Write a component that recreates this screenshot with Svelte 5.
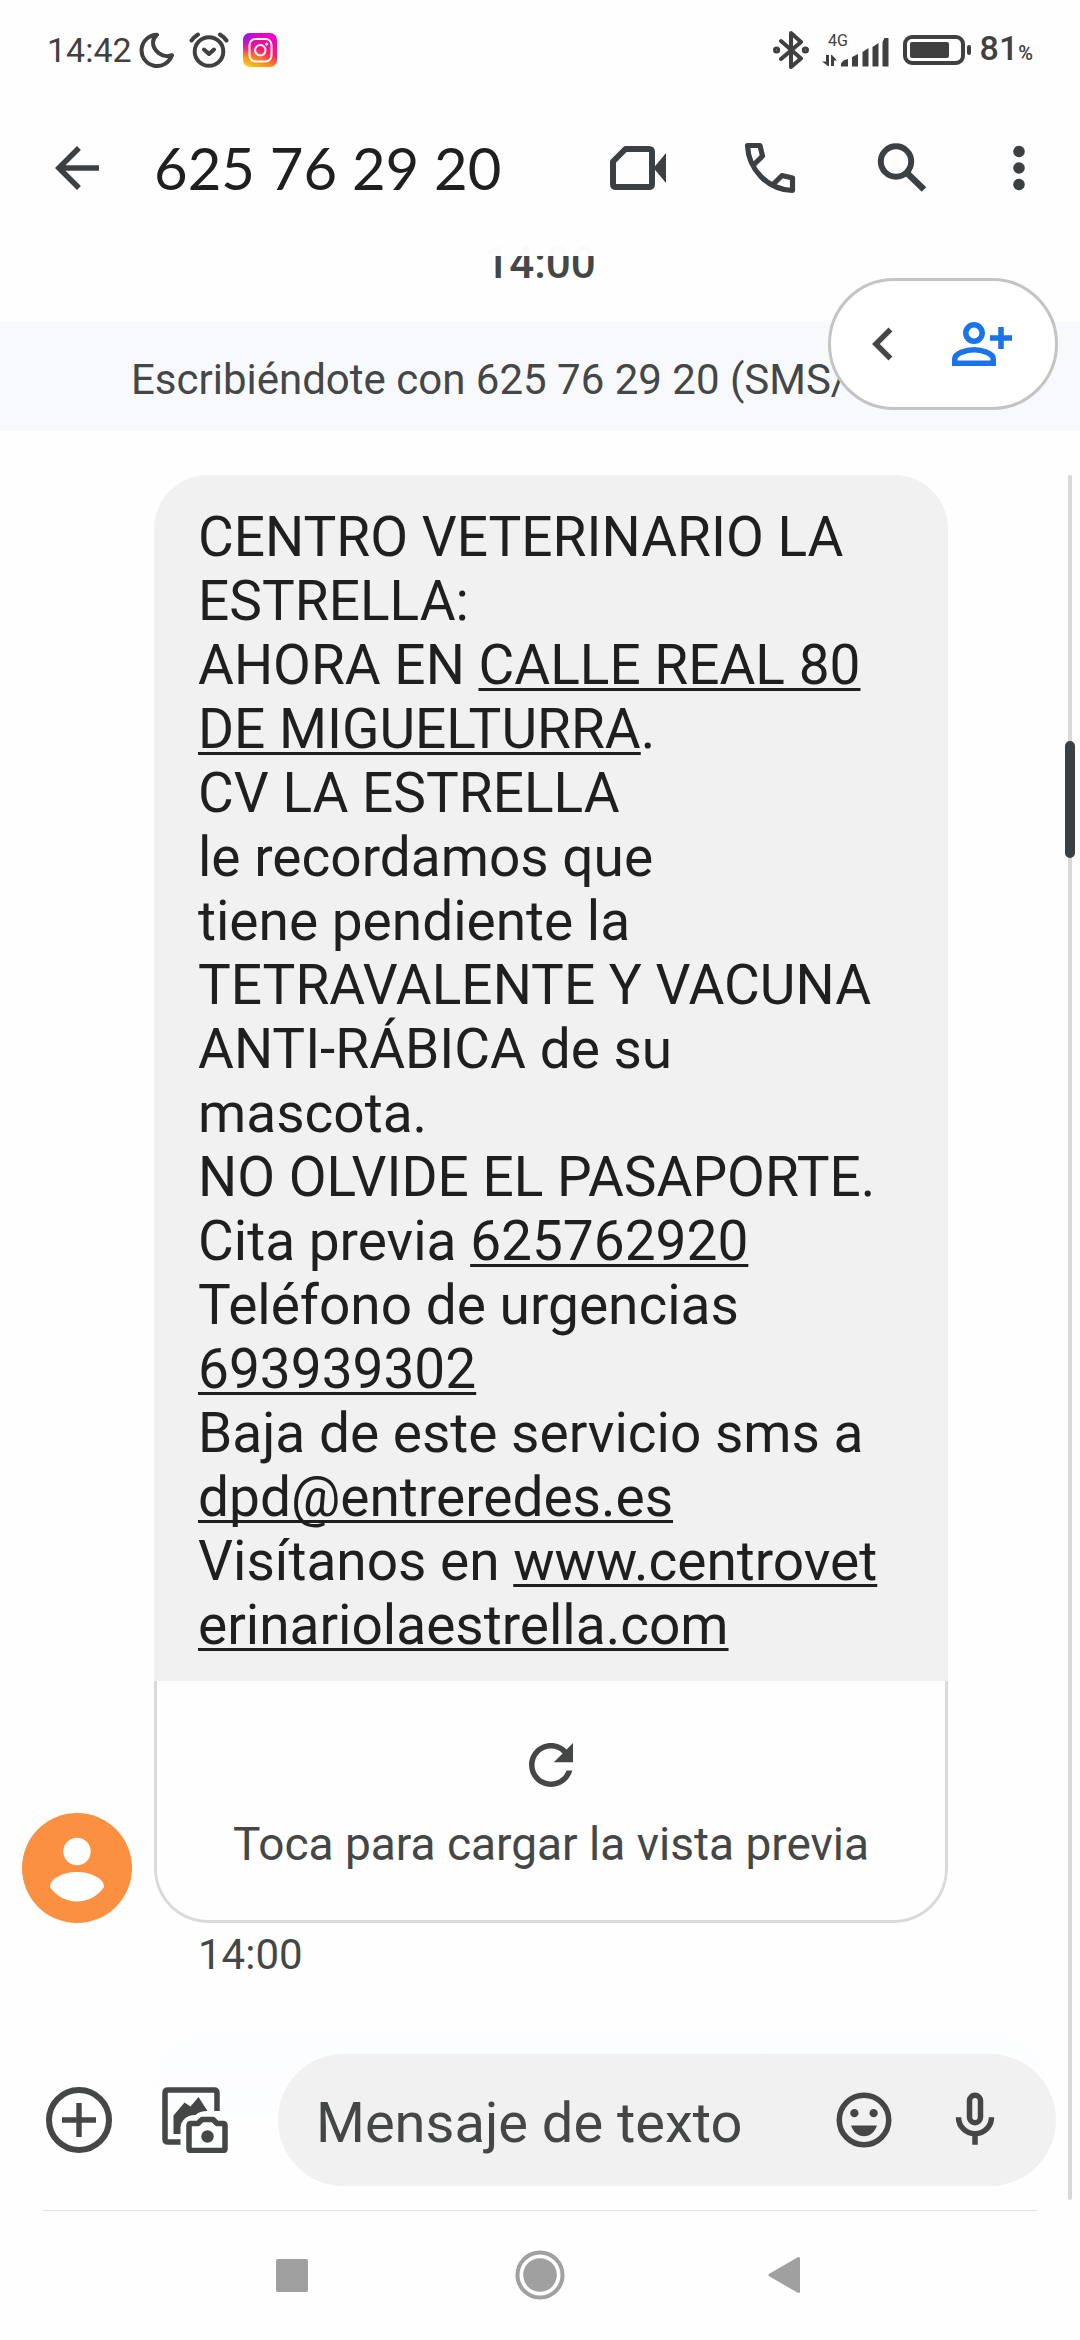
<script>
  const title = '625 76 29 20';
  let draft = $state('');

  const message = [
    [{ text: 'CENTRO VETERINARIO LA' }],
    [{ text: 'ESTRELLA:' }],
    [{ text: 'AHORA EN ' }, { text: 'CALLE REAL 80', href: 'geo:0,0?q=calle+real+80' }],
    [{ text: 'DE MIGUELTURRA', href: 'geo:0,0?q=calle+real+80' }, { text: '.' }],
    [{ text: 'CV LA ESTRELLA' }],
    [{ text: 'le recordamos que' }],
    [{ text: 'tiene pendiente la' }],
    [{ text: 'TETRAVALENTE Y VACUNA' }],
    [{ text: 'ANTI-RÁBICA de su' }],
    [{ text: 'mascota.' }],
    [{ text: 'NO OLVIDE EL PASAPORTE.' }],
    [{ text: 'Cita previa ' }, { text: '625762920', href: 'tel:625762920' }],
    [{ text: 'Teléfono de urgencias' }],
    [{ text: '693939302', href: 'tel:693939302' }],
    [{ text: 'Baja de este servicio sms a' }],
    [{ text: 'dpd@entreredes.es', href: 'mailto:dpd@entreredes.es' }],
    [{ text: 'Visítanos en ' }, { text: 'www.centrovet', href: '#web' }],
    [{ text: 'erinariolaestrella.com', href: '#web' }]
  ];
</script>

<div class="phone">
  <div class="status">
    <div class="status-left">
      <span class="clock">14:42</span>
      <svg width="36" height="36" viewBox="0 0 36 36" fill="none" stroke="#404040" stroke-width="4" stroke-linejoin="round">
        <path d="M18 2.8A15.6 15.6 0 1 0 33 23.2C23 27 14 18 14 10.5C14 7.5 15.5 5 18 2.8Z" />
      </svg>
      <svg width="40" height="36" viewBox="0 0 40 36" fill="none" stroke="#404040" stroke-width="4" stroke-linecap="round" stroke-linejoin="round">
        <circle cx="20" cy="19.5" r="14.3" />
        <path d="M2.5 8.5Q5 5 9 2.500M37.5 8.5Q35 5 31 2.5M15 17.5l5 4.5 5-4.5" />
      </svg>
      <svg width="34" height="34" viewBox="0 0 34 34">
        <defs>
          <linearGradient id="ig" x1="0.2" y1="1" x2="0.6" y2="0">
            <stop offset="0" stop-color="#ffc81e" />
            <stop offset="0.25" stop-color="#ff8a1e" />
            <stop offset="0.55" stop-color="#ff1a6c" />
            <stop offset="1" stop-color="#f000c8" />
          </linearGradient>
          <radialGradient id="igp" cx="0" cy="0" r="0.7">
            <stop offset="0" stop-color="#7a18ff" />
            <stop offset="1" stop-color="#d400e0" stop-opacity="0" />
          </radialGradient>
        </defs>
        <rect width="34" height="34" rx="7" fill="url(#ig)" />
        <rect width="34" height="34" rx="7" fill="url(#igp)" />
        <g fill="none" stroke="#fff" stroke-width="2">
          <rect x="6.5" y="6" width="22" height="22.5" rx="6" />
          <circle cx="17.3" cy="17.3" r="5.2" />
        </g>
        <circle cx="23.5" cy="11" r="1.6" fill="#fff" />
      </svg>
    </div>
    <div class="status-right">
      <svg width="36" height="38" viewBox="0 0 36 38" fill="none" stroke="#404040" stroke-width="4" stroke-linejoin="round" stroke-linecap="round">
        <path d="M8 10L28 27.5 18 36V2L28 11 8 28" />
        <circle cx="3.6" cy="19" r="1.6" />
        <circle cx="32.4" cy="19" r="1.6" />
      </svg>
      <svg width="68" height="36" viewBox="0 0 68 36" fill="#404040">
        <text x="6" y="14" font-size="16">4G</text>
        <path d="M4 23h3v11H6L0 29.5h4zM9 34V23h1l5 5.5h-3V34z" />
        <path d="M19 34.5V32q1-4 7-5v7.5zM30 34.5V25l6-3v12.5zM40.5 34.5V20l6-4v18.5zM50.5 34.5V15l6-4v23.5zM60.5 34.5V10l2-4h4v28.5z" />
      </svg>
      <svg width="70" height="30" viewBox="0 0 70 30">
        <rect x="2" y="2" width="58" height="26" rx="7" fill="none" stroke="#404040" stroke-width="4" />
        <rect x="7" y="7" width="39" height="16" rx="2" fill="#404040" />
        <rect x="64" y="10" width="4" height="10" rx="2" fill="#404040" />
      </svg>
      <span class="battery">81<small>%</small></span>
    </div>
  </div>

  <header class="bar">
    <button class="icon" aria-label="Atrás">
      <svg viewBox="0 0 24 24" fill="#3c4043"><path d="M20 11H7.83l5.59-5.59L12 4l-8 8 8 8 1.41-1.41L7.83 13H20z" /></svg>
    </button>
    <h1>{title}</h1>
    <div class="actions">
      <button class="icon" aria-label="Videollamada">
        <svg viewBox="0 0 66 66" fill="none" stroke="#3c4043" stroke-width="6">
          <path d="M8 26.5L20.5 14H44q3 0 3 3V49q0 3-3 3H11q-3 0-3-3Z" stroke-linejoin="round" />
          <path d="M48.5 33L61 18v30z" fill="#3c4043" stroke="none" />
        </svg>
      </button>
      <button class="icon" aria-label="Llamar">
        <svg viewBox="0 0 66 66" fill="none" stroke="#3c4043" stroke-width="5.2" stroke-linejoin="round">
          <path d="M17 29.5L25.5 21 23 10.5H10.5C11.5 35 31 54.5 55.5 55.5V43L45 40.5 36.5 49" />
        </svg>
      </button>
      <button class="icon" aria-label="Buscar">
        <svg viewBox="0 0 66 66" fill="none" stroke="#3c4043" stroke-width="6">
          <circle cx="27" cy="26.5" r="15.2" />
          <path d="M38.5 38.5L55 54.5" stroke-width="6.5" />
        </svg>
      </button>
      <button class="icon more" aria-label="Más opciones">
        <svg viewBox="0 0 66 66" fill="#3c4043">
          <circle cx="33" cy="16.5" r="5.8" /><circle cx="33" cy="33" r="5.8" /><circle cx="33" cy="49.5" r="5.8" />
        </svg>
      </button>
    </div>
  </header>

  <div class="body">
    <main class="thread">
      <p class="day">14:00</p>
      <p class="notice">Escribiéndote con 625 76 29 20 (SMS/MMS)</p>

      <div class="row">
        <svg class="avatar" viewBox="0 0 110 110" role="img" aria-label="Contacto">
          <circle cx="55" cy="55" r="55" fill="#fb9140" />
          <circle cx="55" cy="38.5" r="13.7" fill="#fff" />
          <path d="M28 74C28 65 42 59 55 59S82 65 82 74C76 83 66 88.5 55 88.5S34 83 28 74Z" fill="#fff" />
        </svg>
        <article class="bubble">
          <p class="text">
            {#each message as line}
              <span class="line">{#each line as part}{#if part.href}<a href={part.href}>{part.text}</a>{:else}{part.text}{/if}{/each}</span>
            {/each}
          </p>
          <button class="preview">
            <svg viewBox="0 0 24 24" fill="#444746"><path d="M17.65 6.35C16.2 4.9 14.21 4 12 4c-4.42 0-7.99 3.58-7.99 8s3.57 8 7.99 8c3.73 0 6.84-2.55 7.73-6h-2.08c-.82 2.33-3.04 4-5.65 4-3.31 0-6-2.69-6-6s2.69-6 6-6c1.66 0 3.14.69 4.22 1.78L13 11h7V4l-2.35 2.35z" /></svg>
            <span>Toca para cargar la vista previa</span>
          </button>
        </article>
      </div>
      <time class="sent">14:00</time>
    </main>

    <!-- Following message, seen faintly through the composer -->
    <div class="next" aria-hidden="true"></div>

    <form class="composer" onsubmit={(e) => e.preventDefault()}>
      <button type="button" class="icon" aria-label="Adjuntar">
        <svg viewBox="0 0 66 66" fill="none" stroke="#444746">
          <circle cx="33" cy="33" r="30" stroke-width="6" />
          <path d="M33 16v34M16 33h34" stroke-width="5.4" />
        </svg>
      </button>
      <button type="button" class="icon" aria-label="Galería y cámara">
        <svg viewBox="0 0 66 66" fill="none" stroke="#444746" stroke-width="5.5">
          <path d="M55 24V6q0-3-3-3H6Q3 3 3 6v46q0 3 3 3h12.5" />
          <path d="M11.5 47V28.5L22.5 15.5l6 4L36.5 10l9 14q-8 0-12 4-8 0-12 5-3 3-3 7v7z" fill="#444746" stroke="none" />
          <path d="M27 38.5q0-2 2-2h7l4-4h11l4 4h6q2 0 2 2v23q0 2-2 2H29q-2 0-2-2z" stroke-linejoin="round" />
          <circle cx="45.5" cy="49.5" r="6.2" fill="#444746" stroke="none" />
        </svg>
      </button>
      <div class="field">
        <input type="text" placeholder="Mensaje de texto" aria-label="Mensaje de texto" bind:value={draft} />
        <button type="button" class="icon" aria-label="Emojis">
          <svg viewBox="0 0 24 24" fill="#444746">
            <circle cx="12" cy="12" r="9" fill="none" stroke="#444746" stroke-width="2" />
            <circle cx="8.5" cy="9.5" r="1.5" /><circle cx="15.5" cy="9.5" r="1.5" />
            <path d="M7.3 14c.7 2.3 2.5 3.9 4.7 3.9s4-1.6 4.7-3.9z" />
          </svg>
        </button>
        <button type="button" class="icon" aria-label="Nota de voz">
          <svg viewBox="0 0 24 24" fill="none" stroke="#444746" stroke-width="2">
            <rect x="10" y="3" width="4" height="10" rx="2" />
            <path d="M6 11a6 6 0 0 0 12 0M12 17v4" />
          </svg>
        </button>
      </div>
    </form>

    <div class="float">
      <button class="icon" aria-label="Contraer">
        <svg viewBox="0 0 24 24" fill="#444746"><path d="M15.41 7.41L14 6l-6 6 6 6 1.41-1.41L10.83 12z" /></svg>
      </button>
      <button class="icon" aria-label="Añadir contacto">
        <svg viewBox="0 0 66 66" fill="none" stroke="#1a73e8" stroke-width="5.5">
          <circle cx="25" cy="22" r="8.2" />
          <path d="M5.75 52.25V48C5.75 42 18 38.75 25 38.75S44.25 42 44.25 48v4.25zM52 16v22M41 27h22" />
        </svg>
      </button>
    </div>
    <div class="track"><div class="thumb"></div></div>
  </div>

  <nav class="system">
    <button class="icon" aria-label="Recientes">
      <svg viewBox="0 0 66 66" fill="#a0a0a0"><rect x="17" y="17" width="32" height="33" rx="2" /></svg>
    </button>
    <button class="icon" aria-label="Inicio">
      <svg viewBox="0 0 66 66" fill="#a0a0a0">
        <circle cx="33" cy="33" r="22.5" fill="none" stroke="#a0a0a0" stroke-width="4" /><circle cx="33" cy="33" r="16.8" />
      </svg>
    </button>
    <button class="icon" aria-label="Volver">
      <svg viewBox="0 0 66 66" fill="#a0a0a0" stroke="#a0a0a0" stroke-width="3" stroke-linejoin="round"><path d="M15 33L43.5 16.5v33z" /></svg>
    </button>
  </nav>
</div>

<style>
  :global(body) {
    background: #fefefe;
  }
  .phone {
    display: flex;
    flex-direction: column;
    min-height: 100vh;
    overflow: hidden;
    font-family: Roboto, 'Liberation Sans', sans-serif;
    color: #444746;
  }
  p,
  h1 {
    margin: 0;
    font-weight: 400;
  }
  svg {
    display: block;
    flex: none;
  }
  button {
    padding: 0;
    border: 0;
    background: none;
    font: inherit;
    color: inherit;
  }
  .icon {
    flex: none;
    width: 66px;
    height: 66px;
  }
  .icon svg {
    width: 100%;
    height: 100%;
  }
  .status {
    display: flex;
    justify-content: space-between;
    height: 60px;
    padding: 20px 47px 0 47px;
    color: #404040;
    font-size: 34px;
    line-height: 60px;
  }
  .status-left,
  .status-right {
    display: flex;
    align-items: center;
  }
  .status-left {
    gap: 14px;
  }
  .status-right {
    gap: 13px;
  }
  .clock {
    margin-right: -7px;
  }
  .battery {
    margin-left: -6px;
    font-weight: 500;
  }
  small {
    font-size: 20px;
  }
  .bar {
    position: relative;
    z-index: 1;
    display: flex;
    align-items: center;
    gap: 44px;
    height: 176px;
    padding: 0 28px 0 44px;
    background: rgba(254, 254, 254, 0.98);
  }
  h1 {
    flex: 1;
    color: #1f1f1f;
    font-family: Lato, Roboto, sans-serif;
    font-size: 58px;
    line-height: 72px;
  }
  .actions {
    display: flex;
    gap: 66px;
  }
  .more {
    margin-left: -15px;
  }
  .body {
    position: relative;
    display: flex;
    flex: 1;
    flex-direction: column;
  }
  .thread {
    flex: 1;
  }
  .day {
    margin-top: -18px;
    font-size: 44px;
    font-weight: 500;
    line-height: 50px;
    text-align: center;
  }
  .notice {
    margin-top: 34px;
    padding: 32px 0 25px 12px;
    background: #f8f9fd;
    font-size: 42px;
    line-height: 52px;
    text-align: center;
    white-space: nowrap;
  }
  .row {
    display: flex;
    align-items: flex-end;
    gap: 22px;
    padding: 44px 132px 0 22px;
  }
  .avatar {
    width: 110px;
    height: 110px;
  }
  .bubble {
    flex: 1;
    overflow: hidden;
    border-radius: 54px;
  }
  .text {
    padding: 30px 44px 24px;
    background: #f1f1f1;
    color: #1f1f1f;
    font-size: 55px;
    line-height: 64px;
  }
  .line {
    display: block;
    white-space: pre;
  }
  a {
    color: inherit;
    text-decoration: underline;
    text-decoration-skip-ink: none;
    text-decoration-thickness: 3px;
    text-underline-offset: 4px;
  }
  .preview {
    display: flex;
    flex-direction: column;
    align-items: center;
    gap: 18px;
    box-sizing: border-box;
    width: 100%;
    padding: 51px 0 48px;
    border: 3px solid #dadada;
    border-top: 0;
    border-radius: 0 0 54px 54px;
    font-size: 46px;
    line-height: 56px;
  }
  .preview svg {
    width: 66px;
    height: 66px;
  }
  .sent {
    display: block;
    margin-top: 6px;
    padding-left: 198px;
    font-size: 42px;
    line-height: 52px;
  }
  .next {
    position: absolute;
    right: 34px;
    bottom: 0;
    left: 153px;
    height: 178px;
    border-radius: 54px 54px 0 0;
    background: linear-gradient(#fcfdff, #fefefe);
  }
  .composer {
    position: relative;
    display: flex;
    align-items: center;
    gap: 50px;
    padding: 0 24px 24px 46px;
  }
  .field {
    display: flex;
    flex: 1;
    align-items: center;
    gap: 45px;
    min-width: 0;
    height: 132px;
    padding: 0 48px 0 38px;
    border-radius: 66px;
    background: #f1f1f1;
  }
  input {
    flex: 1;
    min-width: 0;
    padding: 6px 0 0;
    border: 0;
    outline: 0;
    background: none;
    color: #1f1f1f;
    font: inherit;
    font-size: 56px;
    line-height: 66px;
  }
  input::placeholder {
    color: #444746;
    opacity: 1;
  }
  .float {
    position: absolute;
    top: 22px;
    right: 22px;
    display: flex;
    align-items: center;
    gap: 33px;
    box-sizing: border-box;
    height: 132px;
    padding: 0 40px 0 19px;
    border: 3px solid #c4c4c4;
    border-radius: 66px;
    background: #fff;
  }
  .track {
    position: absolute;
    top: 219px;
    right: 8px;
    bottom: 10px;
    width: 4px;
    border-radius: 2px;
    background: #d8d8d8;
  }
  .thumb {
    width: 10px;
    height: 117px;
    margin: 266px 0 0 -3px;
    border-radius: 5px;
    background: #3c4043;
  }
  .system {
    display: flex;
    justify-content: center;
    gap: 182px;
    margin: 0 43px;
    padding: 31px 0 32px;
    border-top: 1px solid #e3e3e3;
  }
</style>
